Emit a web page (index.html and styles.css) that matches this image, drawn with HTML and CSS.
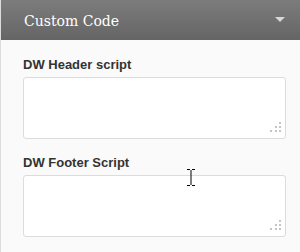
FILE: index.html
```html
<!DOCTYPE html>
<html lang="en">
<head>
  <meta charset="UTF-8">
  <meta name="viewport" content="width=device-width, initial-scale=1.0">
  <title>Custom Code</title>
  <link rel="stylesheet" href="styles.css">
</head>
<body>
  <div class="widget">
    <div class="widget-head">
      <h3>Custom Code</h3>
      <span class="toggle"></span>
    </div>
    <div class="widget-body">
      <div class="field">
        <label for="header-script">DW Header script</label>
        <div class="area">
          <textarea id="header-script"></textarea>
          <svg class="grip" width="12" height="12" viewBox="0 0 12 12">
            <rect x="10" y="0" width="2" height="2"/>
            <rect x="6" y="4" width="2" height="2"/>
            <rect x="10" y="4" width="2" height="2"/>
            <rect x="1" y="8" width="2" height="2"/>
            <rect x="6" y="8" width="2" height="2"/>
            <rect x="10" y="8" width="2" height="2"/>
          </svg>
        </div>
      </div>
      <div class="field">
        <label for="footer-script">DW Footer Script</label>
        <div class="area">
          <textarea id="footer-script"></textarea>
          <svg class="grip" width="12" height="12" viewBox="0 0 12 12">
            <rect x="10" y="0" width="2" height="2"/>
            <rect x="6" y="4" width="2" height="2"/>
            <rect x="10" y="4" width="2" height="2"/>
            <rect x="1" y="8" width="2" height="2"/>
            <rect x="6" y="8" width="2" height="2"/>
            <rect x="10" y="8" width="2" height="2"/>
          </svg>
        </div>
      </div>
    </div>
  </div>

  <!-- mouse pointer seen in the capture -->
  <svg class="pointer" width="8" height="17" viewBox="0 0 8 17">
    <path d="M0 0.5h3M5 0.5h3M4 1v15M0 16.5h3M5 16.5h3" stroke="#000" stroke-width="1" fill="none"/>
  </svg>
</body>
</html>
```

FILE: styles.css
```css
body {
  margin: 0;
  background: #fafafa;
  font-family: "Liberation Sans", Arial, sans-serif;
}
.widget {
  border-left: 1px solid #dcdcdc;
  min-height: 252px;
  box-sizing: border-box;
}
.widget-head {
  height: 40px;
  display: flex;
  align-items: center;
  justify-content: space-between;
  padding: 0 15px 0 23px;
  background: linear-gradient(#7c7c7c, #656565);
}
.widget-head h3 {
  margin: 0;
  font-family: "DejaVu Serif", serif;
  font-weight: normal;
  font-size: 14px;
  color: #fff;
  padding-top: 1px;
}
.toggle {
  width: 0;
  height: 0;
  border-left: 5px solid transparent;
  border-right: 5px solid transparent;
  border-top: 5px solid #d8d8d8;
  margin-top: -2px;
}
.widget-body {
  padding: 16px 14px 0 22px;
  display: flex;
  flex-direction: column;
  gap: 15px;
}
.field label {
  display: block;
  font-size: 13px;
  line-height: 17px;
  font-weight: bold;
  color: #333;
  margin-bottom: 4px;
}
.area {
  position: relative;
}
.area textarea {
  display: block;
  width: 100%;
  height: 62px;
  box-sizing: border-box;
  border: 1px solid #dcdcdc;
  border-radius: 3px;
  background: #fff;
  resize: none;
  outline: none;
}
.grip {
  position: absolute;
  right: 5px;
  bottom: 5px;
  fill: #c4c4c4;
}
.pointer {
  position: absolute;
  left: 187px;
  top: 169px;
}
```
